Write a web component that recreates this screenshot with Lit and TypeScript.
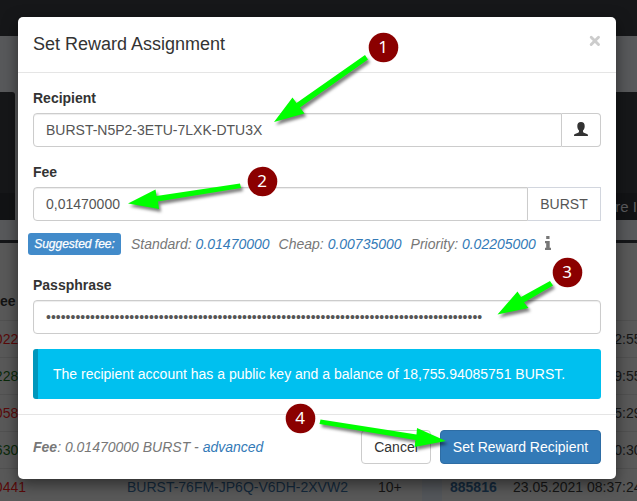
import { LitElement, html, css, svg } from "lit";
import { customElement } from "lit/decorators.js";

interface Row {
  amount: string;
  credit: boolean;
  account: string;
  confirmations: string;
  block: string;
  time: string;
}

const ROWS: Row[] = [
  { amount: "0220", credit: false, account: "", confirmations: "", block: "", time: "23.05.2021 09:12:55" },
  { amount: "2280", credit: true, account: "", confirmations: "", block: "", time: "23.05.2021 08:59:55" },
  { amount: "0580", credit: false, account: "", confirmations: "", block: "", time: "23.05.2021 08:45:29" },
  { amount: "6300", credit: true, account: "", confirmations: "", block: "", time: "23.05.2021 08:40:30" },
  { amount: "0441", credit: false, account: "BURST-76FM-JP6Q-V6DH-2XVW2", confirmations: "10+", block: "885816", time: "23.05.2021 08:37:24" },
];

@customElement("wallet-page")
class WalletPage extends LitElement {
  static styles = css`
    :host { display: block; width: 637px; height: 501px; overflow: hidden; background: #58595b; font: 14px/20px "Liberation Sans", Arial, sans-serif; }
    .nav { height: 36px; background: #161719; }
    .tiles { height: 128px; margin-top: 56px; display: flex; justify-content: space-between; }
    .tile { width: 15px; background: #161719; border-radius: 0 3px 0 0; display: flex; flex-direction: column; justify-content: flex-end; }
    .tile.right { width: 30px; border-radius: 0; }
    .more { height: 27px; line-height: 27px; background: #121315; color: #5c5d5f; font-size: 15px; white-space: nowrap; overflow: hidden; display: flex; justify-content: flex-end; }
    .panel { margin-top: 20px; border-top: 3px solid #151618; background: #595959; height: 258px; }
    .head { height: 77px; box-sizing: border-box; padding-top: 48px; font-weight: bold; color: #131313; }
    .row { height: 37px; box-sizing: border-box; border-top: 1px solid #515151; display: grid; grid-template-columns: 127px 251px 44px 20px 8px 63px 140px; line-height: 36px; white-space: nowrap; color: #151515; }
    .debit { color: #5a0a0a; }
    .credit { color: #0a2a0a; }
    .amount { width: 26px; display: flex; justify-content: flex-end; }
    .account, .block { color: #14293c; }
    .block { font-weight: bold; }
    .band { background: #53565a; }
  `;
  render() {
    return html`
      <div class="nav"></div>
      <div class="tiles">
        <div class="tile"><div class="more"></div></div>
        <div class="tile right"><div class="more">More I</div></div>
      </div>
      <div class="panel">
        <div class="head">ee</div>
        ${ROWS.map((r) => html`
          <div class="row">
            <span class="amount ${r.credit ? "credit" : "debit"}">${r.amount}</span>
            <span class="account">${r.account}</span>
            <span>${r.confirmations}</span>
            <span class="band"></span><span></span>
            <span class="block">${r.block}</span>
            <span>${r.time}</span>
          </div>`)}
      </div>`;
  }
}

@customElement("reward-modal")
class RewardModal extends LitElement {
  static styles = css`
    :host { display: flex; flex-direction: column; box-sizing: border-box; width: 598px; height: 462px; background: #fff; border-radius: 5px; box-shadow: 0 5px 15px rgba(0,0,0,.5); font: 14px/20px "Liberation Sans", Arial, sans-serif; color: #333; }
    .header { height: 56px; box-sizing: border-box; border-bottom: 1px solid #e5e5e5; padding: 14px 15px 0; display: flex; justify-content: space-between; }
    .title { font-size: 18px; line-height: 26px; }
    .close { width: 12px; height: 12px; margin-top: 4px; }
    .body { height: 342px; box-sizing: border-box; border-bottom: 1px solid #e5e5e5; padding: 15px 15px 0; }
    .label { display: block; font-weight: bold; height: 25px; }
    .group { display: flex; height: 34px; }
    .control { flex: 1; box-sizing: border-box; height: 34px; border: 1px solid #ccc; border-radius: 4px; padding: 6px 12px; color: #555; box-shadow: inset 0 1px 1px rgba(0,0,0,.075); white-space: nowrap; overflow: hidden; }
    .group .control { border-radius: 4px 0 0 4px; }
    .addon { box-sizing: border-box; border: 1px solid #ccc; border-left: 0; display: flex; align-items: center; justify-content: center; }
    .contact { width: 39px; border-radius: 0 4px 4px 0; padding-bottom: 2px; }
    .unit { width: 73px; border-color: #d2d6de; color: #555; }
    .fee { margin-top: 15px; }
    .suggest { display: flex; align-items: center; margin: 12px 0 0 -5px; height: 22px; font-style: italic; color: #777; white-space: pre; }
    .badge { box-sizing: border-box; width: 93px; height: 22px; background: #428bca; color: #fff; border-radius: 3px; font-size: 12px; line-height: 22px; text-align: center; margin-right: 10px; -webkit-text-stroke: .25px #fff; }
    .link { color: #337ab7; }
    .gap { margin-left: 9px; }
    .info { margin: -2px 0 0 9px; }
    .pass { margin-top: 20px; }
    .alert { margin-top: 15px; height: 50px; box-sizing: border-box; border-left: 5px solid #0097bc; border-radius: 3px; background: #00c0ef; color: #fff; padding: 15px; }
    .footer { flex: 1; display: flex; align-items: center; padding: 0 15px; }
    .total { flex: 1; font-style: italic; color: #777; }
    .button { box-sizing: border-box; height: 34px; border: 1px solid #ccc; border-radius: 4px; text-align: center; line-height: 32px; width: 70px; white-space: nowrap; }
    .primary { width: 161px; margin-left: 9px; background: #337ab7; border-color: #2e6da4; color: #fff; }
  `;
  render() {
    return html`
      <div class="header">
        <div class="title">Set Reward Assignment</div>
        <svg class="close" viewBox="0 0 12 12"><path d="M2.200 2.200 9.500 9.500M9.500 2.200 2.200 9.500" stroke="#ccc" stroke-width="2.900" stroke-linecap="round"/></svg>
      </div>
      <div class="body">
        <label class="label">Recipient</label>
        <div class="group">
          <div class="control">BURST-N5P2-3ETU-7LXK-DTU3X</div>
          <div class="addon contact">
            <svg width="14" height="14" viewBox="0 0 14 14"><path fill="#333" d="M7 0C4.500 0 3.300 1.500 3.300 4c0 2 .7 3.500 1.700 4.500v1c0 .6-.3.900-.9 1.200L1 12c-.7.300-1 .7-1 2h14c0-1.300-.3-1.700-1-2l-3.100-1.300c-.6-.3-.9-.6-.9-1.200v-1c1-1 1.700-2.500 1.700-4.500C10.700 1.500 9.500 0 7 0z"/></svg>
          </div>
        </div>
        <label class="label fee">Fee</label>
        <div class="group">
          <div class="control">0,01470000</div>
          <div class="addon unit">BURST</div>
        </div>
        <div class="suggest"><span class="badge">Suggested fee:</span><span>Standard: <span class="link">0.01470000</span></span><span class="gap">Cheap: <span class="link">0.00735000</span></span><span class="gap">Priority: <span class="link">0.02205000</span></span><svg class="info" width="6" height="14" viewBox="0 0 6 14"><path fill="#777" d="M1.200 0h3.300v3H1.200zM0 5h4.700v6.800H6V14H0v-2.200h1.200V7.200H0z"/></svg></div>
        <label class="label pass">Passphrase</label>
        <div class="control">${"•".repeat(89)}</div>
        <div class="alert">The recipient account has a public key and a balance of 18,755.94085751 BURST.</div>
      </div>
      <div class="footer">
        <div class="total"><b>Fee</b>: 0.01470000 BURST - <span class="link">advanced</span></div>
        <div class="button">Cancel</div>
        <div class="button primary">Set Reward Recipient</div>
      </div>`;
  }
}

const ARROWS = [
  "274,122 292.500,97.500 296.500,103 365,55 368,59.500 300,107.500 304.500,113.500",
  "128,203.500 155.500,189.500 156.500,196 240,183.500 241,188 158,201.500 159,209",
  "497.500,314.500 517.500,291.500 521,297 550,281 553,285.500 524,302.500 528.500,308",
  "446,441 417,428 416.500,434.500 320.500,419.500 319.500,424 415.500,440 414.500,447",
];
const STEPS = [
  [383.5, 47.5],
  [262.5, 181.5],
  [567.5, 272.5],
  [300.5, 418.5],
];

@customElement("app-root")
class AppRoot extends LitElement {
  static styles = css`
    :host { display: block; position: relative; width: 637px; height: 501px; overflow: hidden; }
    .modal { position: absolute; left: 18px; top: 17px; }
    .marks { position: absolute; left: 0; top: 0; }
    .arrow { fill: #0f0; filter: drop-shadow(2px 3px 1.5px rgba(0,0,0,.5)); }
    .step { fill: #8b0000; }
    .num { fill: #fff; font: 17px "Noto Sans", sans-serif; text-anchor: middle; }
  `;
  render() {
    return html`
      <wallet-page></wallet-page>
      <reward-modal class="modal"></reward-modal>
      <svg class="marks" width="637" height="501">
        ${ARROWS.map((p) => svg`<polygon class="arrow" points=${p} />`)}
        ${STEPS.map(([x, y], i) => svg`<circle class="step" cx=${x} cy=${y} r="14.8" /><text class="num" x=${x - 0.5} y=${y + 5.5}>${i + 1}</text>`)}
      </svg>`;
  }
}
